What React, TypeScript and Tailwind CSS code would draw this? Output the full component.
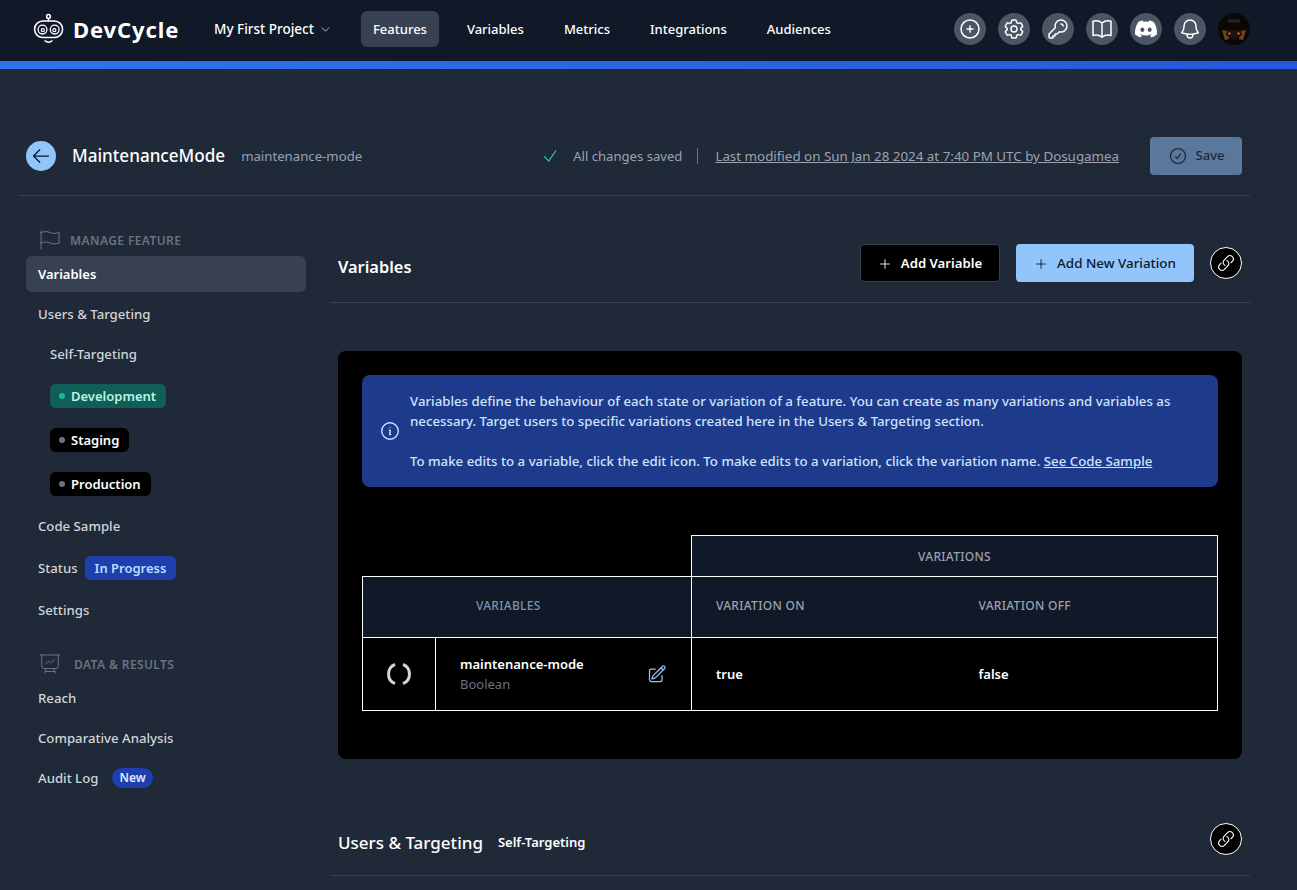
import React from "react";
import { FaDiscord } from "react-icons/fa";
import { HiOutlineKey } from "react-icons/hi";
import {
  HiOutlinePlusCircle,
  HiOutlineCog6Tooth,
  HiOutlineBookOpen,
  HiOutlineBell,
  HiOutlineChevronDown,
  HiOutlineArrowLeft,
  HiOutlineCheck,
  HiOutlineCheckCircle,
  HiOutlineFlag,
  HiOutlinePresentationChartLine,
  HiOutlinePlus,
  HiOutlineLink,
  HiOutlineInformationCircle,
  HiOutlinePencilSquare,
} from "react-icons/hi2";

function Logo() {
  return (
    <svg width="32" height="32" viewBox="0 0 32 32" fill="none" stroke="white" strokeWidth="1.5" className="shrink-0">
      <circle cx="15.5" cy="3.5" r="1.9" />
      <path d="M15.5 5.5V8" />
      <rect x="1.6" y="8" width="28" height="16.5" rx="8.2" />
      <circle cx="9.5" cy="16.6" r="4.4" strokeWidth="1.3" />
      <circle cx="9.8" cy="17.2" r="1.5" strokeWidth="1.2" />
      <circle cx="21.7" cy="16.6" r="4.4" strokeWidth="1.3" />
      <circle cx="21.4" cy="17.2" r="1.5" strokeWidth="1.2" />
      <path d="M11.5 27.5c2.4 2 5.6 2 8 0" />
    </svg>
  );
}

function Avatar() {
  return (
    <svg width="32" height="32" viewBox="0 0 32 32" className="shrink-0">
      <circle cx="16" cy="16" r="16" fill="#090807" />
      <path d="M4 17l6 1 1 8-4 1z" fill="#6e4218" />
      <path d="M28 17l-6 1-1 8 4 1z" fill="#6e4218" />
      <path d="M9 17h14l1 5-8 5-8-5z" fill="#1c130c" />
      <circle cx="11.5" cy="20.5" r="1.2" fill="#c8641e" />
      <circle cx="20.5" cy="20.5" r="1.2" fill="#c8641e" />
      <path d="M10 8h12" stroke="#232323" strokeWidth="3" />
    </svg>
  );
}

function ToggleIcon() {
  return (
    <svg width="24" height="24" viewBox="0 0 24 24" fill="none" stroke="#d1d5db" strokeWidth="3">
      <path d="M8 2.3A10.5 10.5 0 0 0 8 21.7" />
      <path d="M16 2.3A10.5 10.5 0 0 1 16 21.7" />
    </svg>
  );
}

function IconButton({ children }: { children: React.ReactNode }) {
  return (
    <div className="flex h-8 w-8 items-center justify-center rounded-full bg-[#4b5563] text-white">{children}</div>
  );
}

function NavLink({ label, active }: { label: string; active?: boolean }) {
  return (
    <div className={`flex h-9 items-center rounded-md px-3 pt-[2px] text-[13px] font-medium text-white ${active ? "bg-[#374151]" : ""}`}>
      {label}
    </div>
  );
}

function SideRow({ label, active, className = "" }: { label: string; active?: boolean; className?: string }) {
  return (
    <div className={`flex h-9 items-center rounded-md px-3 pt-[2px] ${active ? "bg-[#374151] text-[13px] font-semibold text-white" : "text-[13.2px] font-medium text-[#d1d5db]"} ${className}`}>
      {label}
    </div>
  );
}

function EnvPill({ label, dot, bg, text }: { label: string; dot: string; bg: string; text: string }) {
  return (
    <div className="mb-1 flex h-10 items-center pl-6">
      <span className={`flex h-6 items-center gap-[6px] rounded-md pl-[9px] pr-[10px] pt-[2px] text-[13px] font-semibold ${bg} ${text}`}>
        <span className={`-mt-[2px] h-[6px] w-[6px] rounded-full ${dot}`} />
        {label}
      </span>
    </div>
  );
}

function LinkButton() {
  return (
    <div className="flex h-8 w-8 shrink-0 items-center justify-center rounded-full border border-white bg-black text-white">
      <HiOutlineLink size={18} />
    </div>
  );
}

export default function App() {
  return (
    <div className="h-[890px] overflow-hidden bg-[#1f2937] font-['Noto_Sans',sans-serif]">
      <header className="flex h-[61px] items-center bg-[#111827] pb-[3px] pl-[33px] pr-[47px]">
        <div className="flex w-[169px] items-center gap-2">
          <Logo />
          <span className="text-[22px] font-bold leading-none tracking-[0.9px] text-white">DevCycle</span>
        </div>
        <div className="flex w-[159px] items-center gap-[6px] pl-[12px] text-[13.5px] font-medium text-white">
          My First Project
          <HiOutlineChevronDown size={11} />
        </div>
        <nav className="flex items-center gap-4">
          <NavLink label="Features" active />
          <NavLink label="Variables" />
          <NavLink label="Metrics" />
          <NavLink label="Integrations" />
          <NavLink label="Audiences" />
        </nav>
        <div className="ml-auto flex items-center gap-3">
          <IconButton><HiOutlinePlusCircle size={24} /></IconButton>
          <IconButton><HiOutlineCog6Tooth size={24} /></IconButton>
          <IconButton><HiOutlineKey size={24} strokeWidth={1.5} /></IconButton>
          <IconButton><HiOutlineBookOpen size={24} /></IconButton>
          <IconButton><FaDiscord size={24} /></IconButton>
          <IconButton><HiOutlineBell size={24} /></IconButton>
          <Avatar />
        </div>
      </header>
      <div className="h-2 bg-gradient-to-r from-[#3272e8] to-[#2558dd]" />

      <main className="ml-[18px] w-[1232px]">
        <section className="flex h-[127px] items-start border-b border-[#374151] px-2 pt-[68px]">
          <div className="flex h-[38px] w-full items-center">
            <div className="flex h-[30px] w-[30px] items-center justify-center rounded-full bg-[#93c5fd] text-[#111827]">
              <HiOutlineArrowLeft size={20} />
            </div>
            <h1 className="ml-4 text-[17.1px] font-medium text-white">MaintenanceMode</h1>
            <span className="ml-4 pt-px text-[13.2px] text-[#94a3b8]">maintenance-mode</span>
            <HiOutlineCheck size={18} className="ml-[179px] text-[#2dd4bf]" />
            <span className="ml-[14px] pt-px text-[13.1px] text-[#9ca3af]">All changes saved</span>
            <span className="ml-[15px] h-4 w-px bg-[#6b7280]" />
            <a className="ml-[17px] pt-px text-[13.36px] text-[#9ca3af] underline">Last modified on Sun Jan 28 2024 at 7:40 PM UTC by Dosugamea</a>
            <button className="ml-auto flex h-[38px] w-[92px] items-center justify-center gap-2 rounded bg-[#5a789c] text-[13px] font-medium text-[#1f2937]">
              <HiOutlineCheckCircle size={20} />
              Save
            </button>
          </div>
        </section>

        <div className="flex gap-6 pl-2">
          <aside className="w-[280px] shrink-0 pt-8">
            <div className="mb-1 flex h-6 items-center pl-3 pt-[2px] text-[12px] font-semibold uppercase tracking-[0.4px] text-[#6b7280]">
              <HiOutlineFlag size={24} className="mr-[8px] -mt-[2px] text-[#6b7280]" strokeWidth={1} />
              Manage Feature
            </div>
            <SideRow label="Variables" active className="mb-1" />
            <SideRow label="Users & Targeting" className="mb-1" />
            <SideRow label="Self-Targeting" className="mb-1 pl-6" />
            <EnvPill label="Development" dot="bg-[#14b8a6]" bg="bg-[#115e59]" text="text-[#b9f6e0]" />
            <EnvPill label="Staging" dot="bg-[#6b7280]" bg="bg-black" text="text-white" />
            <EnvPill label="Production" dot="bg-[#6b7280]" bg="bg-black" text="text-white" />
            <div className="-mt-[3px] flex h-[42px] items-center px-3 pt-[2px] text-[13.2px] font-medium text-[#d1d5db]">Code Sample</div>
            <div className="flex h-[42px] items-center gap-[7px] px-3 text-[13.2px] font-medium text-[#d1d5db]">
              <span className="pt-[2px]">Status</span>
              <span className="flex h-6 items-center rounded-md bg-[#1e40af] px-[10px] pt-[2px] text-[13px] font-semibold text-[#bfdbfe]">In Progress</span>
            </div>
            <div className="flex h-[42px] items-center px-3 pt-[2px] text-[13.2px] font-medium text-[#d1d5db]">Settings</div>
            <div className="mb-1 mt-[21px] flex h-6 items-center pl-3 pt-[2px] text-[12px] font-semibold uppercase tracking-[0.4px] text-[#6b7280]">
              <HiOutlinePresentationChartLine size={24} className="mr-[12px] -mt-[2px] text-[#6b7280]" strokeWidth={1} />
              Data &amp; Results
            </div>
            <SideRow label="Reach" className="mb-1" />
            <SideRow label="Comparative Analysis" className="mb-1" />
            <div className="flex h-9 items-center gap-[14px] px-3 text-[13.2px] font-medium text-[#d1d5db]">
              <span className="pt-[2px]">Audit Log</span>
              <span className="flex h-5 items-center rounded-full bg-[#1e40af] px-[7px] text-[12px] font-semibold text-[#dbeafe]">New</span>
            </div>
          </aside>

          <div className="w-[920px] shrink-0">
            <div className="flex items-center border-b border-[#374151] px-2 pb-5 pt-12">
              <h2 className="pt-2 text-[16.4px] font-semibold text-white">Variables</h2>
              <div className="ml-auto flex items-center gap-4">
                <button className="flex h-[38px] w-[140px] items-center justify-center gap-[9px] rounded border border-[#374151] bg-black pt-px text-[13.2px] font-semibold text-white">
                  <HiOutlinePlus size={14} />
                  Add Variable
                </button>
                <button className="flex h-[38px] w-[178px] items-center justify-center gap-[9px] rounded bg-[#93c5fd] pt-px text-[13.4px] font-medium text-[#111827]">
                  <HiOutlinePlus size={14} />
                  Add New Variation
                </button>
                <LinkButton />
              </div>
            </div>

            <div className="mx-2 mt-12 rounded-lg bg-black p-6 pb-12">
              <div className="flex items-center gap-[9px] rounded-lg bg-[#1e3a8a] py-4 pl-[17px] pr-6 text-[13.25px] font-medium leading-5 text-[#cfe3fd]">
                <HiOutlineInformationCircle size={22} className="shrink-0" />
                <div>
                  <p>
                    Variables define the behaviour of each state or variation of a feature. You can create as many variations and variables as necessary. Target users to specific variations created here in the Users &amp; Targeting section.
                  </p>
                  <p className="mt-5">
                    To make edits to a variable, click the edit icon. To make edits to a variation, click the variation name. <span className="underline">See Code Sample</span>
                  </p>
                </div>
              </div>

              <table className="mt-12 w-[856px] table-fixed border-collapse text-left">
                <colgroup>
                  <col className="w-[73px]" />
                  <col className="w-[256px]" />
                  <col className="w-[263px]" />
                  <col />
                </colgroup>
                <thead>
                  <tr className="h-[41px]">
                    <th colSpan={2} />
                    <th colSpan={2} className="border border-white bg-[#111827] pt-[2px] text-center text-[12px] font-medium tracking-[0.3px] text-[#9ca3af]">VARIATIONS</th>
                  </tr>
                  <tr className="h-[61px]">
                    <th colSpan={2} className="border border-white bg-[#111827] pb-[2px] pl-[113px] text-[12px] font-medium tracking-[0.3px] text-[#7c93b0]">VARIABLES</th>
                    <th className="border-y border-l border-white bg-[#111827] pb-[2px] pl-6 text-[12px] font-medium tracking-[0.3px] text-[#9ca3af]">VARIATION ON</th>
                    <th className="border-y border-r border-white bg-[#111827] pb-[2px] pl-6 text-[12px] font-medium tracking-[0.3px] text-[#9ca3af]">VARIATION OFF</th>
                  </tr>
                </thead>
                <tbody>
                  <tr className="h-[73px]">
                    <td className="border border-white text-center">
                      <span className="flex justify-center"><ToggleIcon /></span>
                    </td>
                    <td className="border border-white pl-6 pr-6">
                      <div className="flex items-center justify-between">
                        <div>
                          <div className="text-[13px] font-semibold leading-5 text-white">maintenance-mode</div>
                          <div className="text-[13px] leading-5 text-[#6b7280]">Boolean</div>
                        </div>
                        <HiOutlinePencilSquare size={20} className="text-[#93c5fd]" />
                      </div>
                    </td>
                    <td className="border-y border-l border-white pl-6 pt-[2px] text-[13px] font-semibold text-white">true</td>
                    <td className="border-y border-r border-white pl-6 pt-[2px] text-[13px] font-semibold text-white">false</td>
                  </tr>
                </tbody>
              </table>
            </div>

            <div className="mt-16 flex h-[53px] items-start border-b border-[#374151] px-2">
              <div className="flex h-[40px] items-center gap-[15px]">
                <h2 className="text-[17px] font-medium text-white">Users &amp; Targeting</h2>
                <span className="text-[13px] font-semibold text-white">Self-Targeting</span>
              </div>
              <div className="ml-auto"><LinkButton /></div>
            </div>
          </div>
        </div>
      </main>
    </div>
  );
}
